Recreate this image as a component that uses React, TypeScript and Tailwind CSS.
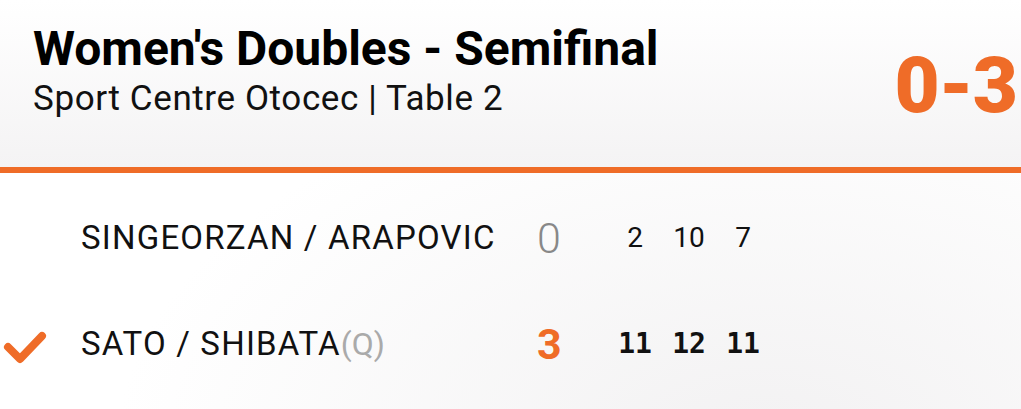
const ORANGE = '#ef6c28';

interface TeamRow {
  id: number;
  name: string;
  seed?: string;
  sets: number;
  points: number[];
  winner: boolean;
}

const rows: TeamRow[] = [
  { id: 1, name: 'SINGEORZAN / ARAPOVIC', sets: 0, points: [2, 10, 7], winner: false },
  { id: 2, name: 'SATO / SHIBATA', seed: '(Q)', sets: 3, points: [11, 12, 11], winner: true },
];

function CheckIcon() {
  return (
    <svg width="50" height="40" viewBox="0 0 50 40" fill="none">
      <path
        d="M8 20 L20 32 L42 9"
        stroke={ORANGE}
        strokeWidth="8"
        strokeLinecap="round"
        strokeLinejoin="round"
      />
    </svg>
  );
}

export default function App() {
  return (
    <div className="w-[1021px] h-[409px] overflow-hidden bg-[radial-gradient(ellipse_at_75%_110%,#f2f1f2_0%,#ffffff_60%)] font-['Roboto',sans-serif] text-[#111]">
      {/* Header */}
      <div className="h-[167px] flex justify-between bg-gradient-to-b from-white to-[#f4f3f4] pl-[33px]">
        <div className="pt-[25px]">
          <h1 className="text-[48px] leading-[48px] font-bold text-black">
            Women's Doubles - Semifinal
          </h1>
          <p className="mt-[8px] text-[35px] leading-[35px] tracking-[0.6px] text-[#111]">
            Sport Centre Otocec | Table 2
          </p>
        </div>
        <div className="pt-[44px] pr-[4px]">
          <span className="text-[78px] leading-[84px] font-black tracking-[-1px]" style={{ color: ORANGE }}>
            0-3
          </span>
        </div>
      </div>
      <div className="h-[6px]" style={{ backgroundColor: ORANGE }} />

      {/* Score rows */}
      <div className="pt-[12px]">
        {rows.map((row) => (
          <div key={row.id} className="h-[106px] flex items-center">
            <div className="w-[81px] pt-[6px]">
              {row.winner && <CheckIcon />}
            </div>
            <div className="w-[456px] text-[33px] tracking-[1.2px] text-[#111]">
              {row.name}
              {row.seed && <span className="text-[32px] text-[#aaa] tracking-[0px]">{row.seed}</span>}
            </div>
            <div
              className={`w-[50px] text-[43px] ${row.winner ? 'font-bold' : 'font-light text-[#888]'}`}
              style={row.winner ? { color: ORANGE } : undefined}
            >
              {row.sets}
            </div>
            <div className="ml-[21px] flex">
              {row.points.map((p, i) => (
                <div
                  key={i}
                  className={`w-[54px] text-center ${
                    row.winner ? "font-bold font-['DejaVu_Sans_Mono',monospace] text-[28px]" : 'font-normal text-[28px]'
                  }`}
                >
                  {p}
                </div>
              ))}
            </div>
          </div>
        ))}
      </div>
    </div>
  );
}
